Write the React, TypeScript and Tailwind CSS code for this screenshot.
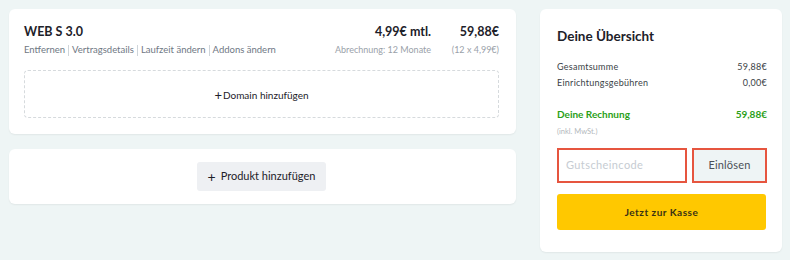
import React from "react";

const font = { fontFamily: "Lato, 'Noto Sans', sans-serif" };

export default function App() {
  return (
    <div
      className="w-[790px] h-[260px] bg-[#eef5f5] flex items-start gap-[24px] pl-[9px] pt-[9px] text-[#1d2129]"
      style={font}
    >
      <div className="w-[507px] flex flex-col gap-[15px]">
        <div className="bg-white rounded-[6px] shadow-[0_1px_2px_rgba(0,0,0,0.06)] pl-[15px] pr-[17px] pt-[15px] pb-[16px] h-[125px] flex flex-col">
          <div className="flex items-start">
            <div className="flex-1">
              <div className="text-[12.5px] font-bold leading-[16px]">WEB S 3.0</div>
              <div className="mt-[4px] flex items-center text-[9.5px] text-[#6f7884] leading-[12px]">
                <span>Entfernen</span>
                <span className="mx-[3px] h-[11px] w-px bg-[#cfd5da]" />
                <span>Vertragsdetails</span>
                <span className="mx-[3px] h-[11px] w-px bg-[#cfd5da]" />
                <span>Laufzeit ändern</span>
                <span className="mx-[3px] h-[11px] w-px bg-[#cfd5da]" />
                <span>Addons ändern</span>
              </div>
            </div>
            <div className="w-[140px] text-right">
              <div className="text-[12.5px] font-bold leading-[16px]">4,99€ mtl.</div>
              <div className="mt-[4px] text-[9px] text-[#9aa1a9] leading-[12px]">Abrechnung: 12 Monate</div>
            </div>
            <div className="w-[68px] text-right">
              <div className="text-[12.5px] font-bold leading-[16px]">59,88€</div>
              <div className="mt-[4px] text-[9px] text-[#9aa1a9] leading-[12px]">(12 x 4,99€)</div>
            </div>
          </div>
          <div className="mt-[14px] h-[49px] border border-dashed border-[#d6dadd] rounded-[4px] flex items-center justify-center text-[10px] text-[#1d2129] pt-[2px]">
            <span className="text-[13px] leading-none mr-[1px]">+</span>Domain hinzufügen
          </div>
        </div>
        <div className="bg-white rounded-[6px] shadow-[0_1px_2px_rgba(0,0,0,0.06)] h-[55px] flex items-center justify-center">
          <button className="h-[29px] w-[129px] bg-[#eef0f3] rounded-[3px] text-[11px] text-[#1d2129] flex items-center justify-center -ml-[2px]">
            <span className="text-[14px] leading-none mr-[5px]">+</span>Produkt hinzufügen
          </button>
        </div>
      </div>

      <div className="w-[242px] h-[243px] bg-white rounded-[6px] shadow-[0_1px_2px_rgba(0,0,0,0.06)] pl-[17px] pr-[15px] pt-[18px] flex flex-col">
        <div className="text-[13.5px] font-bold leading-[18px]">Deine Übersicht</div>
        <div className="mt-[16px] flex justify-between text-[9px] text-[#3a3f47] leading-[12px] tracking-[0.25px]">
          <span>Gesamtsumme</span>
          <span>59,88€</span>
        </div>
        <div className="mt-[4px] flex justify-between text-[9px] text-[#3a3f47] leading-[12px] tracking-[0.25px]">
          <span>Einrichtungsgebühren</span>
          <span>0,00€</span>
        </div>
        <div className="mt-[19px] flex justify-between text-[10px] font-bold text-[#2aa018] leading-[13px]">
          <span>Deine Rechnung</span>
          <span>59,88€</span>
        </div>
        <div className="mt-[6px] text-[7.5px] text-[#b3b8bd] leading-[10px]">(inkl. MwSt.)</div>
        <div className="mt-[11px] flex gap-[5px]">
          <div className="w-[130px] h-[35px] border-2 border-[#e6553f] bg-white flex items-center pl-[7px] text-[11px] tracking-[0.4px] text-[#c6ccd2]">
            Gutscheincode
          </div>
          <div className="w-[75px] h-[35px] border-2 border-[#e6553f] bg-[#eef4f5] flex items-center justify-center text-[11px] tracking-[0.2px] text-[#4a5058]">
            Einlösen
          </div>
        </div>
        <div className="mt-[11px] w-[209px] h-[36px] bg-[#ffc800] rounded-[3px] flex items-center justify-center text-[10px] tracking-[0.5px] font-bold text-[#3a3214]">
          Jetzt zur Kasse
        </div>
      </div>
    </div>
  );
}
